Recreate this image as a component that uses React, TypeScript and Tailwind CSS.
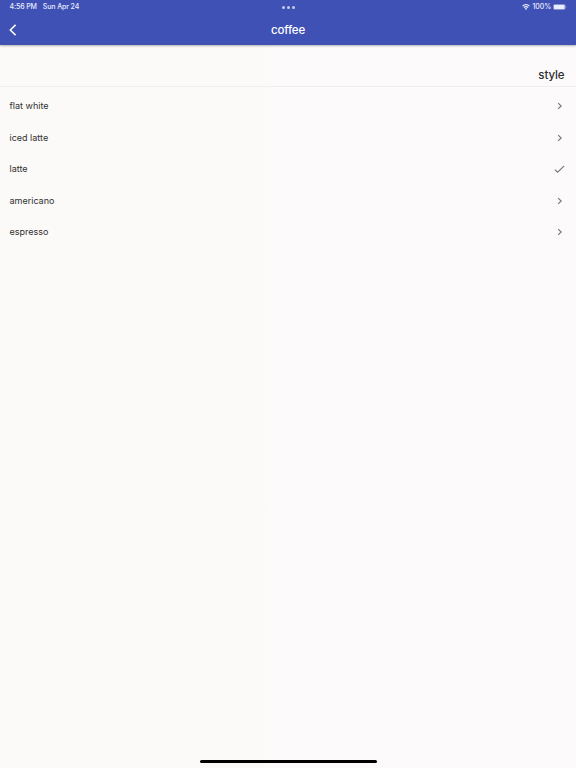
const styles = [
  { name: 'flat white' },
  { name: 'iced latte' },
  { name: 'latte', selected: true },
  { name: 'americano' },
  { name: 'espresso' }
]

function Wifi() {
  return (
    <svg viewBox="0 0 16 12" className="h-[6px] w-[8px]" fill="none" stroke="currentColor" strokeWidth="2.3">
      <path d="M1 4.2a10 10 0 0 1 14 0" />
      <path d="M3.7 7.2a6.2 6.2 0 0 1 8.6 0" />
      <path d="M8 12 5.6 9.4a3.3 3.3 0 0 1 4.8 0Z" fill="currentColor" stroke="none" />
    </svg>
  )
}

function Battery() {
  return (
    <svg viewBox="0 0 14 6" className="h-[6px] w-[14px]" fill="currentColor">
      <rect x="0.25" y="0.25" width="12" height="5.5" rx="1.6" fill="none" stroke="currentColor" strokeWidth="0.5" opacity="0.6" />
      <rect x="0.8" y="0.8" width="10.9" height="4.4" rx="1" />
      <path d="M12.8 2a1.1 1.1 0 0 1 0 2Z" opacity="0.6" />
    </svg>
  )
}

function Chevron() {
  return (
    <svg viewBox="0 0 5 8" className="mr-[3px] h-[8px] w-[5px]" fill="none" stroke="#79777b" strokeWidth="1.2">
      <path d="M1.2 1.1 4.2 4 1.2 6.9" />
    </svg>
  )
}

function Check() {
  return (
    <svg viewBox="0 0 11 9" className="h-[9px] w-[11px]" fill="none" stroke="#757377" strokeWidth="1.1">
      <path d="M0.9 4.6 3.6 7.2 10.2 0.9" />
    </svg>
  )
}

export default function App() {
  return (
    <div className="flex h-screen flex-col overflow-hidden bg-[linear-gradient(90deg,#fbfaf8_0,#fbfaf8_260px,#fcfafb_275px)] font-['Inter',sans-serif] text-[#303030]">
      <header className="h-[45px] shrink-0 bg-[#3f51b5] text-white shadow-[0_1px_2px_rgba(0,0,0,0.3)]">
        <div className="grid h-[14px] grid-cols-3 items-center pr-[9px] pl-[9.5px] text-[7px] leading-[14px] font-medium text-[#e8edff]">
          <div className="flex gap-[6px] tracking-[-0.12px] whitespace-nowrap">
            <span>4:56 PM</span>
            <span>Sun Apr 24</span>
          </div>
          <div className="flex justify-center gap-[2px] opacity-70">
            <i className="size-[3px] rounded-full bg-white" />
            <i className="size-[3px] rounded-full bg-white" />
            <i className="size-[3px] rounded-full bg-white" />
          </div>
          <div className="flex items-center justify-end gap-[2px]">
            <Wifi />
            <span className="tracking-[-0.1px]">100%</span>
            <Battery />
          </div>
        </div>
        <div className="grid h-[31px] grid-cols-3 items-center px-[9px]">
          <svg viewBox="0 0 8 12" className="h-[12px] w-[8px]" fill="none" stroke="currentColor" strokeWidth="1.5">
            <path d="M6.6 0.9 1.3 6l5.3 5.1" />
          </svg>
          <h1 className="text-center text-[11.5px] leading-[16px] font-medium tracking-[-0.15px]">coffee</h1>
        </div>
      </header>

      <h2 className="flex h-[41.5px] shrink-0 items-end justify-end border-b border-[#f0eff0] pr-[11.5px] pb-[3px] text-[11.5px] leading-[16px] font-medium tracking-[-0.1px]">
        style
      </h2>

      <ul className="mt-[4px] flex-1">
        {styles.map((style) => (
          <li key={style.name} className="flex h-[31.5px] items-center justify-between pr-[11px] pl-[9.5px] text-[9px] leading-[12px]">
            <span>{style.name}</span>
            {style.selected ? <Check /> : <Chevron />}
          </li>
        ))}
      </ul>

      <div className="mb-[5px] h-[3px] w-[177px] shrink-0 self-center rounded-full bg-black" />
    </div>
  )
}
